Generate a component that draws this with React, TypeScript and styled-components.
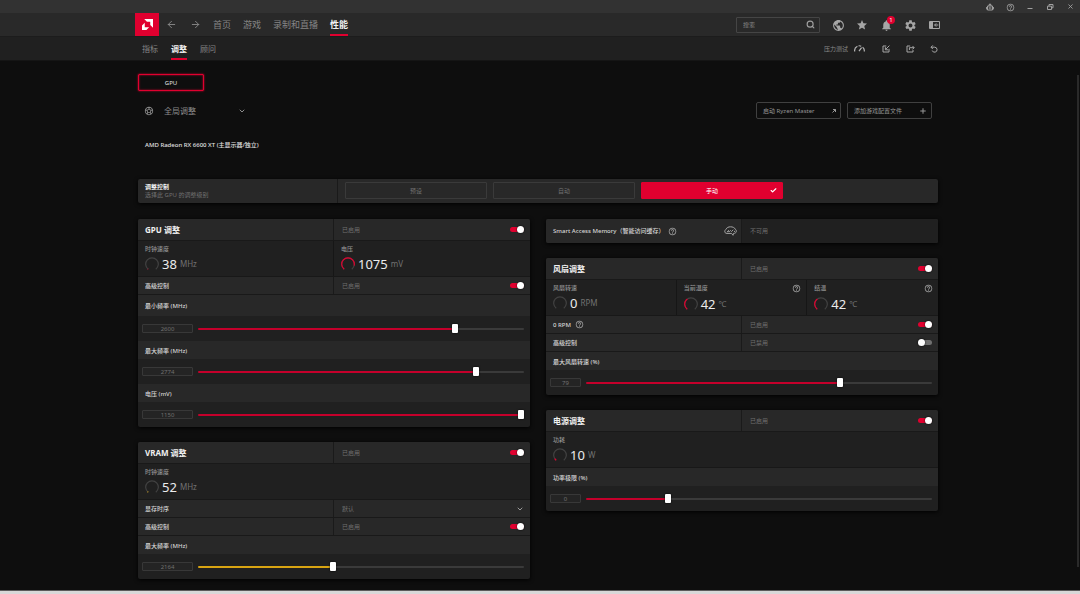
import React, { useState } from "react";
import styled, { createGlobalStyle } from "styled-components";
import { ArrowLeft, ArrowRight, Check, ChevronDown, Plus, Search, X } from "lucide-react";
import { MdHelpOutline, MdNotifications, MdPublic, MdSettings, MdSportsSoccer, MdStar } from "react-icons/md";

const RED = "#e0002f";
const YELLOW = "#d8a412";

const GlobalStyle = createGlobalStyle`
  * { box-sizing: border-box; }
  body {
    margin: 0;
    background: #0e0e0e;
    color: #c8c8c8;
    font: 6px/8px "Noto Sans", "Noto Sans CJK SC", sans-serif;
  }
  button, input, select {
    font: inherit;
    color: inherit;
    margin: 0;
    padding: 0;
    border: 0;
    background: none;
  }
  svg { display: block; flex: none; }
`;

const Page = styled.div`
  min-height: 100vh;
  display: flex;
  flex-direction: column;
`;

const TitleBar = styled.div`
  height: 13px;
  display: flex;
  justify-content: flex-end;
  align-items: center;
  gap: 12px;
  padding-right: 6px;
  background: #323232;
  color: #a0a0a0;
`;

const IconButton = styled.button<{ $size?: number }>`
  position: relative;
  width: ${(p) => p.$size ?? 12}px;
  height: ${(p) => p.$size ?? 12}px;
  display: grid;
  place-items: center;
`;

const Bar = styled.div<{ $sub?: boolean }>`
  padding-right: 4px;
  background: ${(p) => (p.$sub ? "#202020" : "#292929")};
  border-bottom: 1px solid ${(p) => (p.$sub ? "#151515" : "#1c1c1c")};
`;

const BarInner = styled.div<{ $sub?: boolean }>`
  width: 100%;
  max-width: 806px;
  height: 23px;
  margin: 0 auto;
  padding: 0 1px 0 ${(p) => (p.$sub ? 7 : 0)}px;
  display: flex;
  align-items: center;
`;

const Logo = styled.a`
  width: 24px;
  height: 23px;
  display: grid;
  place-items: center;
  background: ${RED};
  color: #fff;
`;

const History = styled.div`
  display: flex;
  gap: 12px;
  margin: 0 12px 0 6px;
  color: #8a8a8a;
`;

const Nav = styled.nav<{ $sub?: boolean }>`
  align-self: stretch;
  flex: 1;
  display: flex;
  gap: ${(p) => (p.$sub ? 13 : 12)}px;
  font-size: ${(p) => (p.$sub ? 8 : 9)}px;
`;

const NavLink = styled.a<{ $active?: boolean }>`
  display: flex;
  align-items: center;
  padding-top: 2px;
  border-bottom: 2px solid ${(p) => (p.$active ? RED : "transparent")};
  color: ${(p) => (p.$active ? "#f2f2f2" : "#858585")};
  font-weight: ${(p) => (p.$active ? 700 : 400)};
  text-decoration: none;
  white-space: nowrap;
`;

const SearchBox = styled.label`
  width: 84px;
  height: 16px;
  margin-right: 12px;
  padding: 0 4px 0 6px;
  display: flex;
  align-items: center;
  border: 1px solid #454545;
  border-radius: 1px;
  color: #a0a0a0;
  input {
    flex: 1;
    min-width: 0;
    outline: 0;
  }
  input::placeholder { color: #858585; }
`;

const Tools = styled.div`
  display: flex;
  align-items: center;
  gap: 12px;
  color: #a6a6a6;
`;

const Badge = styled.span`
  position: absolute;
  top: -3px;
  right: -3px;
  width: 8px;
  height: 8px;
  border-radius: 50%;
  background: ${RED};
  color: #fff;
  text-align: center;
`;

const StressButton = styled.button`
  display: flex;
  align-items: center;
  gap: 6px;
  margin-right: 3px;
  color: #8a8a8a;
  svg { color: #b4b4b4; }
`;

const Body = styled.div`
  flex: 1;
  display: flex;
`;

const Scroller = styled.div`
  width: 4px;
  padding: 14px 1px 23px;
  display: flex;
  &::before {
    content: "";
    flex: 1;
    background: #2a2a2a;
  }
`;

const Main = styled.main`
  flex: 1;
  min-width: 0;
  max-width: 800px;
  margin: 0 auto;
  padding: 13px 0 11px;
`;

const GpuTab = styled.button`
  display: block;
  width: 66px;
  height: 17px;
  border: 1px solid ${RED};
  border-radius: 1px;
  box-shadow: 0 0 2px ${RED}, inset 0 0 2px ${RED};
  color: #e0e0e0;
`;

const ProfileRow = styled.div`
  margin-top: 11px;
  padding: 0 6px;
  display: flex;
  align-items: center;
  gap: 6px;
  color: #8c8c8c;
`;

const ProfileSelect = styled.label`
  position: relative;
  width: 82px;
  margin: 0 auto 0 4px;
  font-size: 8px;
  line-height: 12px;
  select {
    width: 100%;
    height: 12px;
    appearance: none;
    outline: 0;
  }
  svg {
    position: absolute;
    right: 0;
    top: 2px;
    pointer-events: none;
  }
`;

const RowSelect = styled(ProfileSelect)`
  flex: 1;
  width: auto;
  margin: 0;
  font-size: 6px;
  svg { color: #9a9a9a; }
`;

const OutlineButton = styled.button`
  width: 85px;
  height: 17px;
  padding: 0 4px 0 6px;
  display: flex;
  align-items: center;
  justify-content: space-between;
  border: 1px solid #404040;
  border-radius: 2px;
  color: #969696;
  white-space: nowrap;
`;

const DeviceName = styled.h1`
  margin: 18px 0 26px;
  padding-left: 7px;
  font-size: 6px;
  font-weight: 500;
  line-height: 16px;
  color: #e0e0e0;
`;

const Card = styled.section`
  overflow: hidden;
  border-radius: 2px;
  background: #202020;
  box-shadow: 0 1px 4px #000;
`;

const ControlCard = styled(Card)`
  height: 24px;
  margin-bottom: 16px;
  display: grid;
  grid-template-columns: 1fr 3fr;
  background: #282828;
`;

const ControlTitle = styled.div`
  padding: 4px 7px;
  border-right: 1px solid #1a1a1a;
  color: #707070;
  h2 {
    margin: 0;
    font-size: 6px;
    line-height: 8px;
    color: #f0f0f0;
  }
`;

const Modes = styled.div`
  padding: 3px 155px 4px 7px;
  display: grid;
  grid-template-columns: repeat(3, 1fr);
  gap: 6px;
`;

const ModeButton = styled.button<{ $active?: boolean }>`
  display: grid;
  grid-template-columns: 8px 1fr 8px;
  align-items: center;
  padding: 0 4px;
  border: 1px solid ${(p) => (p.$active ? RED : "#3a3a3a")};
  border-radius: 1px;
  background: ${(p) => (p.$active ? RED : "transparent")};
  color: ${(p) => (p.$active ? "#fff" : "#707070")};
  span { grid-column: 2; }
`;

const Columns = styled.div`
  display: grid;
  grid-template-columns: 1fr 1fr;
  gap: 16px;
  align-items: start;
`;

const Column = styled.div`
  display: grid;
  gap: 15px;
`;

const Row = styled.div<{ $height: number; $last?: boolean }>`
  height: ${(p) => p.$height}px;
  display: grid;
  grid-template-columns: 1fr 1fr;
  background: #282828;
  border-bottom: ${(p) => (p.$last ? 0 : 1)}px solid #191919;
`;

const RowName = styled.div`
  padding: 0 4px 0 7px;
  display: flex;
  align-items: center;
  gap: 4px;
  border-right: 1px solid #1a1a1a;
  color: #d6d6d6;
  font-weight: 500;
  white-space: nowrap;
  h2 {
    margin: 0;
    font-size: 8px;
    line-height: 12px;
    color: #f0f0f0;
  }
  svg:nth-of-type(2) { margin-left: auto; }
`;

const RowState = styled.label<{ $dim?: boolean }>`
  padding: 0 6px 0 8px;
  display: flex;
  align-items: center;
  justify-content: space-between;
  background: ${(p) => (p.$dim ? "#202020" : "transparent")};
  color: #707070;
`;

const Switch = styled.input`
  appearance: none;
  width: 14px;
  height: 7px;
  display: grid;
  align-items: center;
  &::before,
  &::after {
    content: "";
    grid-area: 1 / 1;
  }
  &::before {
    height: 5px;
    border-radius: 3px;
    background: #707070;
  }
  &::after {
    width: 7px;
    height: 7px;
    border-radius: 50%;
    background: #fff;
    box-shadow: 0 0 2px #000;
  }
  &:checked::before { background: ${RED}; }
  &:checked::after { justify-self: end; }
`;

const Metrics = styled.div`
  height: 36px;
  display: grid;
  grid-auto-flow: column;
  grid-auto-columns: 1fr;
  border-bottom: 1px solid #181818;
`;

const MetricCell = styled.div`
  padding: 4px 5px 0 7px;
  border-right: 1px solid #161616;
  color: #929292;
  font-weight: 500;
  &:last-child { border-right: 0; }
`;

const MetricHead = styled.div`
  display: flex;
  justify-content: space-between;
`;

const MetricValue = styled.div`
  margin-top: 3px;
  display: flex;
  align-items: center;
  gap: 3px;
  line-height: 16px;
  font-weight: 400;
  strong {
    font-size: 13px;
    font-weight: 400;
    color: #ececec;
  }
  span {
    font-size: 8px;
    color: #727272;
  }
`;

const SliderName = styled.label<{ $tall?: boolean }>`
  height: ${(p) => (p.$tall ? 21 : 18)}px;
  padding: 1px 7px 0;
  display: flex;
  align-items: center;
  background: #282828;
  color: #d6d6d6;
  font-weight: 500;
`;

const SliderRow = styled.div`
  height: 25px;
  padding: 0 6px 0 4px;
  display: flex;
  align-items: center;
  gap: 5px;
`;

const ValueBox = styled.input<{ $narrow?: boolean }>`
  width: ${(p) => (p.$narrow ? 31 : 51)}px;
  height: 9px;
  border: 1px solid #383838;
  border-radius: 1px;
  background: #242424;
  color: #707070;
  text-align: center;
`;

const Range = styled.input<{ $color: string }>`
  appearance: none;
  flex: 1;
  min-width: 0;
  height: 9px;
  outline: 0;
  &::-webkit-slider-runnable-track {
    height: 2px;
    border-radius: 1px;
    background: linear-gradient(to right, ${(p) => p.$color} var(--fill), #3a3a3a var(--fill));
  }
  &::-webkit-slider-thumb {
    appearance: none;
    width: 6px;
    height: 9px;
    margin-top: -4px;
    border-radius: 1px;
    background: #fff;
    box-shadow: 0 0 2px #000;
  }
`;

const Taskbar = styled.footer`
  height: 4px;
  border-top: 1px solid #5a5a5a;
  background: #d8d8d8;
`;

function Gauge({ value, color = RED }: { value: number; color?: string }) {
  const arc = "M3.2 12.2A6.3 6.3 0 1 1 10.8 12.2";
  return (
    <svg width="14" height="14" viewBox="0 0 14 14" fill="none" strokeWidth="1.2">
      <path d={arc} stroke="#424242" />
      {value > 0 && <path d={arc} stroke={color} pathLength={100} strokeDasharray={`${value} 200`} />}
    </svg>
  );
}

function Help() {
  return <MdHelpOutline size={9} color="#a4a4a4" />;
}

type MetricProps = { name: string; value: string; unit: string; level: number; color?: string; help?: boolean };

function Metric({ name, value, unit, level, color, help }: MetricProps) {
  return (
    <MetricCell>
      <MetricHead>
        {name}
        {help && <Help />}
      </MetricHead>
      <MetricValue>
        <Gauge value={level} color={color} />
        <strong>{value}</strong>
        <span>{unit}</span>
      </MetricValue>
    </MetricCell>
  );
}

type ToggleRowProps = { name: string; heading?: boolean; off?: boolean; help?: boolean };

function ToggleRow({ name, heading, off, help }: ToggleRowProps) {
  return (
    <Row $height={heading ? 22 : 18}>
      <RowName>
        {heading ? <h2>{name}</h2> : name}
        {help && <Help />}
      </RowName>
      <RowState>
        {off ? "已禁用" : "已启用"}
        <Switch type="checkbox" defaultChecked={!off} />
      </RowState>
    </Row>
  );
}

type SliderProps = { id: string; name: string; value: string; at: number; color?: string; tall?: boolean; narrow?: boolean };

function Slider({ id, name, value, at, color = "#c4002b", tall, narrow }: SliderProps) {
  const [position, setPosition] = useState(at);
  return (
    <div>
      <SliderName htmlFor={id} $tall={tall}>{name}</SliderName>
      <SliderRow>
        <ValueBox $narrow={narrow} defaultValue={value} aria-label={name} />
        <Range
          id={id}
          type="range"
          min={0}
          max={1000}
          value={position}
          $color={color}
          onChange={(e) => setPosition(Number(e.target.value))}
          style={{ "--fill": `${position / 10}%` } as React.CSSProperties}
        />
      </SliderRow>
    </div>
  );
}

export default function App() {
  return (
    <Page>
      <GlobalStyle />
      <TitleBar>
        <IconButton $size={8} aria-label="反馈">
          <svg width="8" height="8" viewBox="0 0 8 8" fill="none" stroke="currentColor">
            <path d="M1.5 3h5v4h-5zM3 3V1.6h2V3M0.6 4v2.4M7.4 4v2.4M4 0.5v1" />
            <path d="M3.3 4v2M4.8 4v2" strokeWidth=".8" />
          </svg>
        </IconButton>
        <IconButton $size={8} aria-label="帮助"><MdHelpOutline size={9} /></IconButton>
        <IconButton $size={8} aria-label="最小化">
          <svg width="8" height="8" viewBox="0 0 8 8" stroke="currentColor"><path d="M1.5 5.5h5" /></svg>
        </IconButton>
        <IconButton $size={8} aria-label="还原">
          <svg width="8" height="8" viewBox="0 0 8 8" fill="none" stroke="currentColor">
            <path d="M1.5 3.2h4v3.3h-4zM3 3V1.5h4v3.3H5.6" />
          </svg>
        </IconButton>
        <IconButton $size={8} aria-label="关闭"><X size={7} strokeWidth={3} /></IconButton>
      </TitleBar>

      <Bar>
        <BarInner>
          <Logo href="#" aria-label="AMD">
            <svg width="11" height="11" viewBox="0 0 12 12" fill="currentColor">
              <path d="M2.4 0H12V9.6L9 6.6V3H5.4ZM3 4.2 0 7.2V12H4.8L7.8 9H3Z" />
            </svg>
          </Logo>
          <History>
            <IconButton aria-label="后退"><ArrowLeft size={11} /></IconButton>
            <IconButton aria-label="前进"><ArrowRight size={11} /></IconButton>
          </History>
          <Nav>
            <NavLink href="#">首页</NavLink>
            <NavLink href="#">游戏</NavLink>
            <NavLink href="#">录制和直播</NavLink>
            <NavLink href="#" $active>性能</NavLink>
          </Nav>
          <SearchBox>
            <input type="search" placeholder="搜索" aria-label="搜索" />
            <Search size={9} strokeWidth={3} />
          </SearchBox>
          <Tools>
            <IconButton aria-label="网页"><MdPublic size={13} /></IconButton>
            <IconButton aria-label="收藏"><MdStar size={12} /></IconButton>
            <IconButton aria-label="通知">
              <MdNotifications size={13} />
              <Badge>1</Badge>
            </IconButton>
            <IconButton aria-label="设置"><MdSettings size={13} /></IconButton>
            <IconButton aria-label="侧边栏">
              <svg width="11" height="8" viewBox="0 0 11 8" fill="none" stroke="currentColor">
                <path d="M.5.5h10v7H.5z" />
                <path d="M1 1h3v6H1z" fill="currentColor" stroke="none" />
                <path d="M9.3 4H5.6M7.2 2.4 5.6 4l1.6 1.6" />
              </svg>
            </IconButton>
          </Tools>
        </BarInner>
      </Bar>

      <Bar $sub>
        <BarInner $sub>
          <Nav $sub>
            <NavLink href="#">指标</NavLink>
            <NavLink href="#" $active>调整</NavLink>
            <NavLink href="#">顾问</NavLink>
          </Nav>
          <Tools>
            <StressButton>
              压力测试
              <svg width="11" height="9" viewBox="0 0 11 9" fill="none" stroke="currentColor" strokeWidth="1.2">
                <path d="M.7 7.5A4.8 4.8 0 0 1 3.4 2.3M4.6 1.8A4.8 4.8 0 0 1 7.2 2.2M8.6 3.1A4.8 4.8 0 0 1 10.3 7.5M5 7.2 7.6 3.6" />
              </svg>
            </StressButton>
            <IconButton aria-label="导入">
              <svg width="8" height="8" viewBox="0 0 8 8" fill="none" stroke="currentColor">
                <path d="M4.3 1H1v6h6V3.8M7.4.6 3.8 4.2M3.4 2.2v2.6H6" />
              </svg>
            </IconButton>
            <IconButton aria-label="导出">
              <svg width="9" height="8" viewBox="0 0 9 8" fill="none" stroke="currentColor">
                <path d="M4.2 1H1v6h6V5M3.4 5V2.7H8M6.5 1 8.2 2.7 6.5 4.4" />
              </svg>
            </IconButton>
            <IconButton aria-label="重置">
              <svg width="8" height="8" viewBox="0 0 8 8" fill="none" stroke="currentColor">
                <path d="M1 2.2h3.6a2.5 2.5 0 1 1-2.4 3.3M2.8.4 1 2.2 2.8 4" />
              </svg>
            </IconButton>
          </Tools>
        </BarInner>
      </Bar>

      <Body>
        <Main>
          <GpuTab>GPU</GpuTab>
          <ProfileRow>
            <MdSportsSoccer size={10} />
            <ProfileSelect>
              <select aria-label="配置文件">
                <option>全局调整</option>
              </select>
              <ChevronDown size={8} strokeWidth={3} />
            </ProfileSelect>
            <OutlineButton>
              启动 Ryzen Master
              <svg width="4" height="4" viewBox="0 0 4 4" fill="none" stroke="currentColor">
                <path d="M.5 3.5 3.5.5M1 .5h2.5V3" />
              </svg>
            </OutlineButton>
            <OutlineButton>
              添加游戏配置文件
              <Plus size={8} strokeWidth={3} />
            </OutlineButton>
          </ProfileRow>
          <DeviceName>AMD Radeon RX 6600 XT (主显示器/独立)</DeviceName>

          <ControlCard>
            <ControlTitle>
              <h2>调整控制</h2>
              选择此 GPU 的调整级别
            </ControlTitle>
            <Modes>
              <ModeButton><span>预设</span></ModeButton>
              <ModeButton><span>自动</span></ModeButton>
              <ModeButton $active>
                <span>手动</span>
                <Check size={7} strokeWidth={4} />
              </ModeButton>
            </Modes>
          </ControlCard>

          <Columns>
            <Column>
              <Card>
                <ToggleRow heading name="GPU 调整" />
                <Metrics>
                  <Metric name="时钟速度" value="38" unit="MHz" level={2} />
                  <Metric name="电压" value="1075" unit="mV" level={86} />
                </Metrics>
                <ToggleRow name="高级控制" />
                <Slider id="gpu-min" name="最小频率 (MHz)" value="2600" at={793} tall />
                <Slider id="gpu-max" name="最大频率 (MHz)" value="2774" at={858} />
                <Slider id="gpu-volt" name="电压 (mV)" value="1150" at={1000} />
              </Card>
              <Card>
                <ToggleRow heading name="VRAM 调整" />
                <Metrics>
                  <Metric name="时钟速度" value="52" unit="MHz" level={3} color={YELLOW} />
                </Metrics>
                <Row $height={18}>
                  <RowName>显存时序</RowName>
                  <RowState>
                    <RowSelect as="span">
                      <select aria-label="显存时序">
                        <option>默认</option>
                      </select>
                      <ChevronDown size={8} strokeWidth={3} />
                    </RowSelect>
                  </RowState>
                </Row>
                <ToggleRow name="高级控制" />
                <Slider id="vram-max" name="最大频率 (MHz)" value="2164" at={411} color={YELLOW} />
              </Card>
            </Column>

            <Column>
              <Card>
                <Row $height={24} $last>
                  <RowName>
                    Smart Access Memory（智能访问缓存）
                    <Help />
                    <svg width="13" height="10" viewBox="0 0 13 10" fill="none" stroke="#a4a4a4">
                      <path d="M3 7.4C1.3 7.4.6 6.3.8 5.2 1 4 1.5 3.5 2.2 3.2 2.6 1.6 4.500.8 6.500.8s4.300.8 4.700 2.400c1 .6 1.300 1.500 1 2.600-.3 1.200-1.500 1.700-2.600 1.500L9 9.300 7.600 7.400Z" />
                      <path d="M3 5.6h1.500V4.200M5.200 5.800 6.500 4.500 7.500 5.500 9.300 3.800M10 5.400h1" />
                    </svg>
                  </RowName>
                  <RowState $dim>不可用</RowState>
                </Row>
              </Card>
              <Card>
                <ToggleRow heading name="风扇调整" />
                <Metrics>
                  <Metric name="风扇转速" value="0" unit="RPM" level={0} />
                  <Metric name="当前温度" value="42" unit="℃" level={38} help />
                  <Metric name="结温" value="42" unit="℃" level={38} help />
                </Metrics>
                <ToggleRow name="0 RPM" help />
                <ToggleRow name="高级控制" off />
                <Slider id="fan-max" name="最大风扇转速 (%)" value="79" at={737} narrow />
              </Card>
              <Card>
                <ToggleRow heading name="电源调整" />
                <Metrics>
                  <Metric name="功耗" value="10" unit="W" level={7} />
                </Metrics>
                <Slider id="power" name="功率极限 (%)" value="0" at={231} narrow />
              </Card>
            </Column>
          </Columns>
        </Main>
        <Scroller />
      </Body>
      <Taskbar />
    </Page>
  );
}
